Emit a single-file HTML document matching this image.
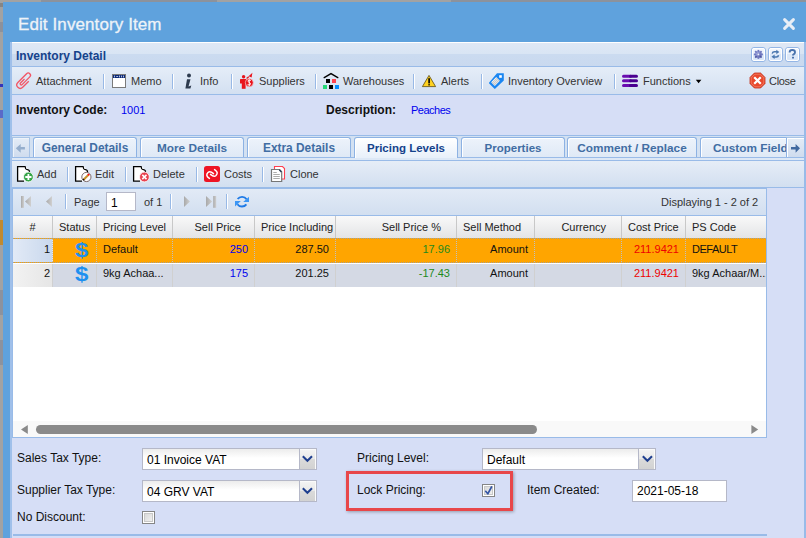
<!DOCTYPE html>
<html><head><meta charset="utf-8">
<style>
*{box-sizing:border-box;margin:0;padding:0}
html,body{width:806px;height:538px;overflow:hidden;background:#a2a2a2;font-family:"Liberation Sans",sans-serif;position:relative}
.a{position:absolute}
.t{position:absolute;white-space:nowrap;line-height:1}
#win{left:3px;top:2px;width:803px;height:536px;background:#5fa2dd}
#title{left:18px;top:16px;font-size:17px;letter-spacing:0.1px;color:#eef3f8;-webkit-text-stroke:0.3px #eef3f8}
#panel{left:10px;top:42px;width:796px;height:496px;background:#d6def6;border-left:2px solid #a0c0ea}
#phdr{left:12px;top:42px;width:792px;height:25px;border-top:1px solid #fff;border-bottom:1px solid #99bbe8;background:linear-gradient(#dfe8f5 0,#d9e5f4 46%,#cbdbf0 50%,#c9d9ef 100%)}
#ptb{left:12px;top:67px;width:792px;height:28px;border-bottom:1px solid #99bbe8;background:linear-gradient(#e5edf8,#d3e0f1)}
.sep{position:absolute;width:2px;height:15px;border-left:1px solid #98b9e6;border-right:1px solid #fff}
.tb{font-size:11px;color:#333}
.lblb{font-size:12px;font-weight:bold;color:#111}
.blue{font-size:11px;color:#0000ee}
#rb{left:804px;top:42px;width:2px;height:496px;background:#99bbe8}
/* tabs */
#strip{left:12px;top:135px;width:792px;height:26px;border-top:1px solid #99bbe8;border-bottom:1px solid #99bbe8;background:#d3e1f2}
#stripb{left:12px;top:157px;width:792px;height:3px;background:#dde8f6;border-top:1px solid #99bbe8}
.tab{position:absolute;top:137px;height:20px;border:1px solid #8db2e3;border-bottom:none;border-radius:3px 3px 0 0;background:linear-gradient(#edf3fb,#dfe9f6);box-shadow:inset 1px 1px 0 #fff}
.tab.on{height:21px;background:linear-gradient(#ffffff,#e8f0fa);}
.tabt{position:absolute;top:5px;left:0;width:100%;text-align:center;font-size:11.5px;font-weight:bold;color:#416da3;line-height:1}
.tab.on .tabt{color:#15428b}
#gtb{left:12px;top:161px;width:792px;height:27px;border-bottom:1px solid #99bbe8;background:linear-gradient(#e6edf7,#d2dff0)}
/* grid */
#grid{left:12px;top:188px;width:755px;height:250px;border:1px solid #99bbe8;background:#fff}
#pg{left:13px;top:189px;width:753px;height:27px;border-bottom:1px solid #99bbe8;background:linear-gradient(#e2eaf6,#d2dff0)}
#ghdr{left:13px;top:216px;width:753px;height:22px;background:linear-gradient(#f9f9f9,#e3e4e6)}
.hc{position:absolute;top:0;height:22px;border-right:1px solid #c8c8c8;font-size:11px;color:#222;line-height:23px;padding:0 6px;white-space:nowrap;overflow:hidden}
.row{position:absolute;left:13px;width:753px;height:24px}
.c{position:absolute;top:0;height:23px;font-size:11px;line-height:20px;padding:0 6px;white-space:nowrap;overflow:hidden;color:#111}
.r1 .c{border-right:1px dotted #c0c0c0}
.r2 .c{border-right:1px solid #d0d0d0;line-height:18px}
.r{text-align:right}
.lbl{font-size:12px;color:#111}
.combo{position:absolute;height:22px;border:1px solid #b5b8c8;background:linear-gradient(#ececec,#fff 45%)}
.combo .v{position:absolute;left:4px;top:5px;font-size:12px;color:#000;line-height:1;white-space:nowrap}
.trig{position:absolute;right:0;top:0;width:17px;height:20px;border-left:1px solid #b5b8c8;box-shadow:inset -1px 1px 0 #fafafa;background:linear-gradient(#f4f4f4 0,#e9e9e9 48%,#dadada 52%,#d2d2d2 100%)}
.cb{position:absolute;width:13px;height:13px;border:1px solid #858585;background:#fff;box-shadow:inset 0 0 0 1px #fff,inset 0 0 0 2px #c8c8c8;background-image:linear-gradient(135deg,#d4d4d4,#f6f6f6)}
</style></head>
<body>
<div class="a" style="left:41px;top:0;width:176px;height:2px;background:#8c929c"></div>
<div class="a" style="left:451px;top:0;width:355px;height:2px;background:#8c929c"></div>
<div class="a" id="win"></div>
<div class="a" style="left:0;top:3px;width:3px;height:4px;background:#858585"></div>
<div class="a" style="left:0;top:22px;width:3px;height:10px;background:#8c919c"></div>
<div class="a" style="left:0;top:84px;width:3px;height:3px;background:#3434b8"></div>
<div class="a" style="left:0;top:110px;width:3px;height:8px;background:#5a6ac8"></div>
<div class="a" style="left:0;top:220px;width:3px;height:25px;background:#c08a30"></div>
<div class="a" style="left:0;top:290px;width:3px;height:25px;background:#8c929e"></div>
<div class="a" style="left:0;top:340px;width:3px;height:25px;background:#8c929e"></div>
<div class="t" id="title">Edit Inventory Item</div>
<div class="a" id="panel"></div>
<div class="a" id="rb"></div>
<div class="a" id="phdr"></div>
<div class="t" style="left:16px;top:50px;font-size:12px;font-weight:bold;color:#15428b">Inventory Detail</div>
<div class="a" id="ptb"></div>

<!-- toolbar texts -->
<div class="t tb" style="left:36px;top:76px">Attachment</div>
<div class="sep" style="left:103px;top:74px"></div>
<div class="t tb" style="left:131px;top:76px">Memo</div>
<div class="sep" style="left:172px;top:74px"></div>
<div class="t tb" style="left:200px;top:76px">Info</div>
<div class="sep" style="left:231px;top:74px"></div>
<div class="t tb" style="left:259px;top:76px">Suppliers</div>
<div class="sep" style="left:315px;top:74px"></div>
<div class="t tb" style="left:343px;top:76px">Warehouses</div>
<div class="sep" style="left:413px;top:74px"></div>
<div class="t tb" style="left:441px;top:76px">Alerts</div>
<div class="sep" style="left:481px;top:74px"></div>
<div class="t tb" style="left:508px;top:76px">Inventory Overview</div>
<div class="sep" style="left:614px;top:74px"></div>
<div class="t tb" style="left:643px;top:76px">Functions</div>
<div class="t tb" style="left:769px;top:76px;letter-spacing:-0.3px">Close</div>

<!-- code row -->
<div class="t lblb" style="left:16px;top:104px">Inventory Code:</div>
<div class="t blue" style="left:121px;top:105px">1001</div>
<div class="t lblb" style="left:326px;top:104px">Description:</div>
<div class="t blue" style="left:411px;top:105px;letter-spacing:-0.5px">Peaches</div>

<!-- tabs -->
<div class="a" id="strip"></div>
<div class="a" id="stripb"></div>
<div class="a" style="left:12px;top:137px;width:18px;height:20px;border:1px solid #a9c4e6;border-bottom:none;box-shadow:inset 1px 1px 0 #eef3fa;background:linear-gradient(#e4ecf7,#cfdcee)"></div>
<div class="tab" style="left:33px;width:104px"><div class="tabt" style="font-size:11.9px">General Details</div></div>
<div class="tab" style="left:140px;width:104px"><div class="tabt" style="font-size:11.8px">More Details</div></div>
<div class="tab" style="left:247px;width:104px"><div class="tabt" style="font-size:11.9px">Extra Details</div></div>
<div class="tab on" style="left:354px;width:104px"><div class="tabt">Pricing Levels</div></div>
<div class="tab" style="left:461px;width:104px"><div class="tabt">Properties</div></div>
<div class="tab" style="left:567px;width:130px"><div class="tabt" style="font-size:11.8px">Comment / Replace</div></div>
<div class="tab" style="left:700px;width:104px;overflow:hidden"><div class="tabt" style="text-align:left;left:12px;font-size:11.8px">Custom Fields</div></div>
<div class="a" style="left:786px;top:137px;width:18px;height:20px;border-left:1px solid #8db2e3;border-top:1px solid #a9c4e6;box-shadow:inset 1px 1px 0 #fff;background:linear-gradient(#e4ecf7,#cfdcee)"></div>

<!-- grid toolbar -->
<div class="a" id="gtb"></div>
<div class="t tb" style="left:37px;top:169px">Add</div>
<div class="sep" style="left:67px;top:167px"></div>
<div class="t tb" style="left:95px;top:169px">Edit</div>
<div class="sep" style="left:125px;top:167px"></div>
<div class="t tb" style="left:153px;top:169px">Delete</div>
<div class="sep" style="left:196px;top:167px"></div>
<div class="t tb" style="left:224px;top:169px">Costs</div>
<div class="sep" style="left:262px;top:167px"></div>
<div class="t tb" style="left:290px;top:169px">Clone</div>

<!-- grid -->
<div class="a" id="grid"></div>
<div class="a" id="pg"></div>
<div class="t tb" style="left:74px;top:197px">Page</div>
<div class="a" style="left:106px;top:192px;width:30px;height:19px;border:1px solid #b5b8c8;background:#fff"></div>
<div class="t" style="left:111px;top:197px;font-size:12px;color:#000">1</div>
<div class="t tb" style="left:144px;top:197px">of 1</div>
<div class="sep" style="left:65px;top:194px"></div>
<div class="sep" style="left:170px;top:194px"></div>
<div class="sep" style="left:226px;top:194px"></div>
<div class="t tb" style="left:661px;top:197px">Displaying 1 - 2 of 2</div>

<div class="a" id="ghdr">
  <div class="hc" style="left:0;width:40px;text-align:center">#</div>
  <div class="hc" style="left:40px;width:44px">Status</div>
  <div class="hc" style="left:84px;width:76px">Pricing Level</div>
  <div class="hc r" style="left:160px;width:82px;padding-right:13px">Sell Price</div>
  <div class="hc" style="left:242px;width:81px">Price Including</div>
  <div class="hc r" style="left:323px;width:121px;padding-right:15px">Sell Price %</div>
  <div class="hc" style="left:444px;width:78px">Sell Method</div>
  <div class="hc r" style="left:522px;width:87px;padding-right:15px">Currency</div>
  <div class="hc" style="left:609px;width:64px">Cost Price</div>
  <div class="hc" style="left:673px;width:80px;border-right:none">PS Code</div>
</div>

<div class="row r1" style="top:238px;height:25px;background:#ffa500;border-top:1px dotted #a0a0a0;border-bottom:1px dotted #a0a0a0">
  <div class="c r" style="left:0;width:40px;background:linear-gradient(90deg,#e2eaf6,#c9d8ed);padding-right:2px">1</div>
  <div class="c" style="left:40px;width:44px"></div>
  <div class="t" style="left:62px;top:0px;font-size:21px;font-weight:bold;color:#1e90f0;transform:scaleX(1.15);transform-origin:0 0">$</div>
  <div class="c" style="left:84px;width:76px">Default</div>
  <div class="c r" style="left:160px;width:82px;color:#0000ee">250</div>
  <div class="c r" style="left:242px;width:81px">287.50</div>
  <div class="c r" style="left:323px;width:121px;color:#1d8a1d">17.96</div>
  <div class="c r" style="left:444px;width:78px">Amount</div>
  <div class="c" style="left:522px;width:87px"></div>
  <div class="c r" style="left:609px;width:64px;color:#ee0000">211.9421</div>
  <div class="c" style="left:673px;width:80px;letter-spacing:-0.5px;border-right:none">DEFAULT</div>
</div>
<div class="row r2" style="top:263px;height:24px;background:#d4d9e4;border-top:1px solid #fff">
  <div class="c r" style="left:0;width:40px;background:linear-gradient(90deg,#f2f2f2,#e6e6e6);padding-right:2px">2</div>
  <div class="c" style="left:40px;width:44px"></div>
  <div class="t" style="left:62px;top:-1px;font-size:21px;font-weight:bold;color:#1e90f0;transform:scaleX(1.15);transform-origin:0 0">$</div>
  <div class="c" style="left:84px;width:76px">9kg Achaa...</div>
  <div class="c r" style="left:160px;width:82px;color:#0000ee">175</div>
  <div class="c r" style="left:242px;width:81px">201.25</div>
  <div class="c r" style="left:323px;width:121px;color:#1d8a1d">-17.43</div>
  <div class="c r" style="left:444px;width:78px">Amount</div>
  <div class="c" style="left:522px;width:87px"></div>
  <div class="c r" style="left:609px;width:64px;color:#ee0000">211.9421</div>
  <div class="c" style="left:673px;width:80px;border-right:none">9kg Achaar/M...</div>
</div>
<!-- scrollbar -->
<div class="a" style="left:13px;top:421px;width:753px;height:16px;background:#f9f9f9"></div>
<div class="a" style="left:36px;top:425px;width:501px;height:9px;border-radius:5px;background:#8a8a8a"></div>

<!-- form -->
<div class="t lbl" style="left:17px;top:452px">Sales Tax Type:</div>
<div class="combo" style="left:142px;top:448px;width:175px"><div class="v">01 Invoice VAT</div><div class="trig"></div></div>
<div class="t lbl" style="left:357px;top:452px">Pricing Level:</div>
<div class="combo" style="left:482px;top:448px;width:174px"><div class="v">Default</div><div class="trig"></div></div>
<div class="t lbl" style="left:17px;top:484px">Supplier Tax Type:</div>
<div class="combo" style="left:142px;top:480px;width:175px"><div class="v">04 GRV VAT</div><div class="trig"></div></div>
<div class="t lbl" style="left:357px;top:484px">Lock Pricing:</div>
<div class="cb" style="left:482px;top:484px"></div>
<div class="t lbl" style="left:527px;top:484px">Item Created:</div>
<div class="a" style="left:632px;top:480px;width:95px;height:22px;border:1px solid #b5b8c8;background:#fff"></div>
<div class="t" style="left:637px;top:485px;font-size:12px;color:#000">2021-05-18</div>
<div class="t lbl" style="left:17px;top:511px">No Discount:</div>
<div class="cb" style="left:142px;top:511px"></div>
<div class="a" style="left:346px;top:471px;width:167px;height:40px;border:3px solid #e8474a;box-shadow:1px 1px 3px rgba(0,0,0,.3)"></div>
<div class="a" style="left:13px;top:534px;width:754px;height:2px;background:#99bbe8"></div>

<svg class="a" style="left:0;top:0" width="806" height="538" viewBox="0 0 806 538">
<defs>
<linearGradient id="gbtn" x1="0" y1="0" x2="0" y2="1"><stop offset="0" stop-color="#f4f8fd"/><stop offset="1" stop-color="#dbe7f6"/></linearGradient>
<linearGradient id="gpg" x1="0" y1="0" x2="1" y2="0"><stop offset="0" stop-color="#a9a9a9"/><stop offset="1" stop-color="#d0d0d0"/></linearGradient>
</defs>
<!-- title close -->
<path d="M784.6 19.6L793.4 28.4M793.4 19.6L784.6 28.4" stroke="#e8eef6" stroke-width="3" stroke-linecap="round"/>
<!-- header tools -->
<defs>
<linearGradient id="gbtn2" x1="0" y1="0" x2="0" y2="1"><stop offset="0" stop-color="#f6f9fe"/><stop offset="0.5" stop-color="#eaf1fb"/><stop offset="0.5" stop-color="#dce8f8"/><stop offset="1" stop-color="#d9e6f8"/></linearGradient>
<linearGradient id="ggear" x1="0" y1="0" x2="1" y2="1"><stop offset="0" stop-color="#b4bcec"/><stop offset="1" stop-color="#5058a4"/></linearGradient>
</defs>
<g stroke="#94b6e6" fill="url(#gbtn2)">
<rect x="751.5" y="47.5" width="14" height="14" rx="2.5"/>
<rect x="768.5" y="47.5" width="14" height="14" rx="2.5"/>
<rect x="785.5" y="47.5" width="14" height="14" rx="2.5"/>
</g>
<g fill="none" stroke="#fff" stroke-width="1">
<rect x="752.5" y="48.5" width="12" height="12" rx="1.5"/>
<rect x="769.5" y="48.5" width="12" height="12" rx="1.5"/>
<rect x="786.5" y="48.5" width="12" height="12" rx="1.5"/>
</g>
<g transform="translate(758.4,54.4)">
<circle r="3.4" fill="url(#ggear)"/>
<g fill="#7078c0">
<rect x="-0.9" y="-4.5" width="1.8" height="2" />
<rect x="-0.9" y="2.5" width="1.8" height="2" />
<rect x="-4.5" y="-0.9" width="2" height="1.8" />
<rect x="2.5" y="-0.9" width="2" height="1.8" />
<rect x="-0.9" y="-4.5" width="1.8" height="2" transform="rotate(45)"/>
<rect x="-0.9" y="2.5" width="1.8" height="2" transform="rotate(45)" fill="#5058a4"/>
<rect x="-4.5" y="-0.9" width="2" height="1.8" transform="rotate(45)"/>
<rect x="2.5" y="-0.9" width="2" height="1.8" transform="rotate(45)" fill="#5058a4"/>
</g>
<circle r="0.9" fill="#eef0fb"/>
</g>
<g fill="none" stroke="#4a78b0" stroke-width="1.5">
<path d="M772.2 53.6Q772.6 51.7 774.5 51.7H777.5"/>
<path d="M778.6 55.3Q778.2 56.9 776.4 56.9H773.5"/>
</g>
<path d="M776.3 49.8L779.4 52L776.3 54.2Z" fill="#4a78b0"/>
<path d="M774.6 54.6L771.5 56.8L774.6 59Z" fill="#4a78b0"/>
<path d="M789.6 52.4Q789.6 50 792.3 50Q795 50 795 52.3Q795 53.6 793.6 54.3Q793 54.7 793 55.6" fill="none" stroke="#4872ad" stroke-width="1.9"/>
<rect x="792" y="56.8" width="2" height="1.7" fill="#4872ad"/>

<!-- paperclip -->
<g transform="translate(24.3,80.8) rotate(45) scale(0.95)" fill="none" stroke="#f25565" stroke-width="1.4">
<path d="M-1.2 -1.5V4.5A1.2 1.2 0 0 0 1.2 4.5V-7A2.4 2.4 0 0 0 -3.6 -7V6A3.6 3.6 0 0 0 3.6 6V-3"/>
</g>
<!-- memo -->
<rect x="112.5" y="74.5" width="13" height="13" fill="#fff" stroke="#7a7a7a"/>
<rect x="113" y="75" width="12" height="3" fill="#0b2a78"/>
<g fill="#c8d0e8"><rect x="114" y="75.6" width="0.9" height="1.8"/><rect x="116.3" y="76.1" width="1.8" height="0.9"/><rect x="119.1" y="75.6" width="0.9" height="1.8"/><rect x="121" y="75.6" width="0.9" height="1.8"/><rect x="123" y="75.6" width="0.9" height="1.8"/></g>
<!-- info -->
<circle cx="189" cy="75.4" r="2" fill="#2d3b4e"/>
<path d="M187 79.2h3.5l-2 7.2 2.8-.9-.9 3.1h-5z" fill="#2d3b4e"/>
<!-- suppliers -->
<g fill="#e8141c">
<circle cx="243.6" cy="76.8" r="1.7"/>
<rect x="240" y="79" width="6.4" height="4.6" rx="0.6"/>
<rect x="241.8" y="83" width="3.8" height="5.8"/>
</g>
<circle cx="249.3" cy="82.7" r="4" fill="#e8141c" stroke="#f4d0d4" stroke-width="0.7"/>
<path d="M250.8 80.6Q249.3 79.6 248 80.6Q247.4 81.6 249.2 82.4Q251.1 83.2 250.4 84.4Q249.2 85.4 247.6 84.6M249.3 79.3V86" fill="none" stroke="#fff" stroke-width="0.9"/>
<path d="M246.6 78.6L248.8 76.8" stroke="#e8141c" stroke-width="1.3"/>
<path d="M248.6 76.2L252.4 72.8L251.6 77.6Z" fill="#e8141c"/>
<!-- warehouses -->
<path d="M324.2 77.6L331 73.6L337.8 77.6" fill="none" stroke="#000" stroke-width="1.4" stroke-linecap="round"/>
<rect x="326" y="79" width="4" height="4" fill="#000"/>
<rect x="332" y="79" width="4" height="4" fill="#ff4553"/>
<rect x="323" y="85" width="4" height="4" fill="#24d877"/>
<rect x="329" y="85" width="4" height="4" fill="#000"/>
<rect x="335" y="85" width="4" height="4" fill="#0a8fff"/>
<!-- alerts -->
<path d="M429 75.4L435.6 86.6H422.4Z" fill="#ffd21f" stroke="#5a4a10" stroke-width="0.8" stroke-linejoin="round"/>
<rect x="428.3" y="78.2" width="1.6" height="5.2" fill="#000"/>
<rect x="428.3" y="84.2" width="1.6" height="1.2" fill="#000"/>
<!-- tag -->
<path d="M497 73.2H503.8V80.4L495.4 88.6Q494.8 89.2 494.2 88.6L489.2 83.6Q488.6 83 489.2 82.4Z" fill="#1a86f2"/>
<rect x="499.2" y="75.2" width="2.6" height="2.6" fill="#fff"/>
<g transform="translate(495.5,81.5) rotate(-45)"><rect x="-3.6" y="-2.6" width="7.2" height="5.2" fill="#f4f4f4"/>
<path d="M-3.6 -1.2H3.6M-3.6 0.2H3.6M-3.6 1.6H3.6" stroke="#9a9a9a" stroke-width="0.6"/></g>
<!-- functions -->
<g stroke-width="3" stroke-linecap="round">
<path d="M623.5 76.3H630.5M623.5 80.8H630.5M623.5 85.5H630.5" stroke="#6a0db0"/>
<path d="M630.5 76.3H636.5M630.5 80.8H636.5M630.5 85.5H636.5" stroke="#4a0090"/>
</g>
<path d="M695.8 79.8H701.4L698.6 83.2Z" fill="#000"/>
<!-- close octagon -->
<path d="M754.4 73H760.6L765 77.4V83.6L760.6 88H754.4L750 83.6V77.4Z" fill="#e9482c" stroke="#c0301a" stroke-width="0.8"/>
<path d="M754.9 74.2H760.1L763.8 77.9V83.1L760.1 86.8H754.9L751.2 83.1V77.9Z" fill="none" stroke="#f58a70" stroke-width="0.7"/>
<path d="M755 78L760 83M760 78L755 83" stroke="#fff" stroke-width="2.2" stroke-linecap="square"/>

<!-- doc icons -->
<g fill="#fff" stroke="none">
<path d="M17.6 166.6H25.6L29.2 170.3V181.2H17.6Z"/>
<path d="M75.6 166.6H83.6L87.2 170.3V181.2H75.6Z"/>
<path d="M133.6 166.6H141.6L145.2 170.3V181.2H133.6Z"/>
</g>
<g fill="none" stroke="#000" stroke-width="1.3">
<path d="M29.4 172.5V170.6M25.6 166.6H17.6V181.2H24"/>
<path d="M87.4 172.5V170.6M83.6 166.6H75.6V181.2H82"/>
<path d="M145.4 172.5V170.6M141.6 166.6H133.6V181.2H140"/>
</g>
<g fill="none" stroke="#000" stroke-width="1.2">
<path d="M25.4 166.6Q25 169.4 27.4 169.6Q28.8 169.7 29.4 170.8"/>
<path d="M83.4 166.6Q83 169.4 85.4 169.6Q86.8 169.7 87.4 170.8"/>
<path d="M141.4 166.6Q141 169.4 143.4 169.6Q144.8 169.7 145.4 170.8"/>
</g>
<circle cx="28.4" cy="177" r="4.9" fill="#36a548" stroke="#fff" stroke-width="0.8"/>
<path d="M28.4 173.9V180.1M25.3 177H31.5" stroke="#fff" stroke-width="1.8"/>
<circle cx="86.4" cy="177" r="4.6" fill="#fff" stroke="#7d6a6a" stroke-width="1"/>
<path d="M83.8 179.5L88.3 175" stroke="#c8902a" stroke-width="2"/>
<path d="M88 175.3L89.2 174.1" stroke="#ff1010" stroke-width="2"/>
<path d="M83.3 180L84 179.3" stroke="#000" stroke-width="2"/>
<circle cx="144.4" cy="177" r="4.9" fill="#e8424f" stroke="#fff" stroke-width="0.8"/>
<path d="M142.3 174.9L146.5 179.1M146.5 174.9L142.3 179.1" stroke="#fff" stroke-width="1.5"/>
<!-- costs -->
<rect x="204" y="166" width="16" height="16" rx="2.5" fill="#ee1424"/>
<g fill="none" stroke="#fff" stroke-width="1.5" stroke-linecap="round">
<path d="M209.4 178.4Q205 175.5 208 172.5Q210 170.6 213.5 173.6"/>
<path d="M214.6 169.6Q219 172.5 216 175.5Q214 177.4 210.5 174.4"/>
</g>
<!-- clone -->
<path d="M274.5 166.5H282.5L284.5 168.5V179H274.5Z" fill="#fff" stroke="#ff4050" stroke-width="1.1"/>
<path d="M271.5 169.5H279.5L281.7 171.7V181.5H271.5Z" fill="#fff" stroke="#777" stroke-width="1.2"/>
<path d="M279.3 169.8L281.4 171.9" stroke="#2a3a55" stroke-width="1.4"/>
<path d="M273.3 172.5H276.8M273.3 174.5H279.8M273.3 176.5H279.8M273.3 178.5H279.8" stroke="#888" stroke-width="0.7"/>

<!-- paging -->
<rect x="21" y="196" width="3" height="11.8" fill="url(#gpg)"/>
<path d="M25 201.5L31 196V207Z" fill="url(#gpg)"/>
<path d="M46 201.5L52 196V207Z" fill="url(#gpg)"/>
<path d="M190 201.5L184 196V207Z" fill="url(#gpg)"/>
<path d="M212.2 201.5L206 196V207Z" fill="url(#gpg)"/>
<rect x="213.2" y="196" width="3" height="11.8" fill="url(#gpg)"/>
<g fill="none" stroke="#1f7ae6" stroke-width="1.9">
<path d="M237.6 199A5.6 5.6 0 0 1 246.6 199.2"/>
<path d="M246.4 204.4A5.6 5.6 0 0 1 237.4 204.2"/>
</g>
<path d="M243.2 202H249V196.8Z" fill="#3b96f5"/>
<path d="M235 201H240.8L235 206.6Z" fill="#3b96f5"/>
<!-- tab scroller arrows -->
<path d="M15.8 148.3L20.7 143.9V147H24.9V149.6H20.7V152.7Z" fill="#95aecd"/>
<path d="M800 148.3L795.6 143.9V147H791V149.6H795.6V152.7Z" fill="#4169a0"/>
<!-- scroll arrows -->
<path d="M21 429.5L27.8 425V434Z" fill="#8a8a8a"/>
<path d="M758.2 429.5L751.4 425V434Z" fill="#8a8a8a"/>

<!-- combo triggers -->
<g fill="none" stroke="#1f3f8f" stroke-width="2">
<path d="M302.8 456.2L307.4 460.8L312 456.2"/>
<path d="M302.8 488.2L307.4 492.8L312 488.2"/>
<path d="M642.8 456.2L647.4 460.8L652 456.2"/>
</g>
<!-- check -->
<path d="M485.7 491.3L487.8 493.8L491.5 487" fill="none" stroke="#3354a4" stroke-width="1.7" stroke-linecap="round" stroke-linejoin="round"/>
</svg>
</body></html>
